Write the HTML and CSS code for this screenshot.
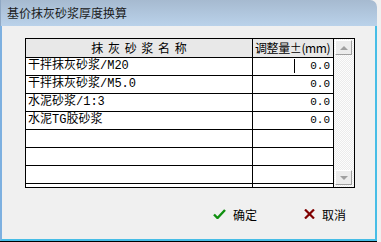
FILE: index.html
```html
<!DOCTYPE html>
<html lang="zh-CN">
<head>
  <meta charset="UTF-8">
  <title>基价抹灰砂浆厚度换算</title>
  <link rel="stylesheet" href="styles.css">
</head>
<body>
  <div class="window">
    <div class="titlebar">基价抹灰砂浆厚度换算</div>
    <div class="client">
      <div class="grid">
        <div class="table">
          <div class="row head">
            <div class="cell name">抹 灰 砂 浆 名 称</div>
            <div class="cell val">调整量±(mm)</div>
          </div>
          <div class="row">
            <div class="cell name">干拌抹灰砂浆/M20</div>
            <div class="cell val"><span class="caret"></span>0.0</div>
          </div>
          <div class="row">
            <div class="cell name">干拌抹灰砂浆/M5.0</div>
            <div class="cell val">0.0</div>
          </div>
          <div class="row">
            <div class="cell name">水泥砂浆/1:3</div>
            <div class="cell val">0.0</div>
          </div>
          <div class="row">
            <div class="cell name">水泥TG胶砂浆</div>
            <div class="cell val">0.0</div>
          </div>
          <div class="row"><div class="cell name"></div><div class="cell val"></div></div>
          <div class="row"><div class="cell name"></div><div class="cell val"></div></div>
          <div class="row"><div class="cell name"></div><div class="cell val"></div></div>
          <div class="row"><div class="cell name"></div><div class="cell val"></div></div>
        </div>
        <div class="scroll">
          <div class="sbtn"><span class="arrow up"></span></div>
          <div class="sbtn"><span class="arrow down"></span></div>
        </div>
      </div>

      <div class="actions">
        <button class="btn" type="button">
          <svg width="13" height="10" viewBox="0 0 13 10"><path d="M1 5.5 L4.5 9 L12 1" fill="none" stroke="#109010" stroke-width="2.4"/></svg>
          确定
        </button>
        <button class="btn" type="button">
          <svg width="11" height="10" viewBox="0 0 11 10"><path d="M1 0.5 L10 9.5 M10 0.5 L1 9.5" fill="none" stroke="#800000" stroke-width="2.2"/></svg>
          取消
        </button>
      </div>
    </div>
  </div>
</body>
</html>
```

FILE: styles.css
```css
* {
  box-sizing: border-box;
}

body {
  margin: 0;
  padding: 0;
  background: #f0f0f0;
  font-family: "Noto Sans CJK SC", sans-serif;
  font-size: 12px;
  color: #000;
}

.window {
  width: 377px;
  height: 242px;
  display: flex;
  flex-direction: column;
  border-bottom: 1px solid #000;
}

.titlebar {
  height: 26px;
  line-height: 26px;
  padding-left: 6px;
  background: linear-gradient(#a6bad0, #bad2ea);
  border-radius: 0 7px 0 0;
  border-left: 1px solid #8fa8c4;
  color: #1a1a1a;
}

.client {
  flex: 1;
  background: #f0f0f0;
  border-left: 2px solid #7db0e0;
  border-right: 2px solid #46bde6;
  border-bottom: 2px solid #46bde6;
  padding: 12px 0 0 23px;
}

.grid {
  width: 330px;
  height: 150px;
  border: 1px solid #000;
  display: flex;
  background: #fff;
}

.table {
  width: 308px;
  height: 148px;
  overflow: hidden;
}

.row {
  display: flex;
  height: 18px;
  border-bottom: 1px solid #000;
}

.row.head {
  height: 19px;
  background: #e8e8e8;
}

.cell {
  height: 100%;
  border-right: 1px solid #000;
  line-height: 17px;
  white-space: nowrap;
  overflow: hidden;
}

.cell.name {
  width: 227px;
  padding-left: 2px;
  font-family: "Liberation Mono", "Noto Sans CJK SC", monospace;
}

.cell.val {
  width: 81px;
  position: relative;
  text-align: right;
  padding-right: 3px;
  font-family: "Liberation Mono", monospace;
  font-size: 11px;
}

.head .cell {
  line-height: 18px;
  text-align: center;
  font-family: "Noto Sans CJK SC", sans-serif;
  font-size: 12px;
  padding: 0;
}

.head .cell.name {
  word-spacing: 2px;
}

.head .cell.val {
  text-align: left;
  padding-left: 2px;
  letter-spacing: -0.4px;
}

.caret {
  position: absolute;
  left: 41px;
  top: 1px;
  width: 1px;
  height: 14px;
  background: #000;
}

.scroll {
  width: 20px;
  height: 148px;
  padding: 1px 2px 2px 1px;
  display: flex;
  flex-direction: column;
  justify-content: space-between;
  background: repeating-conic-gradient(#fdfdfd 0 25%, #ececec 0 50%) 0 0 / 2px 2px;
}

.sbtn {
  height: 15px;
  background: #ececec;
  border-top: 1px solid #fff;
  border-left: 1px solid #fff;
  border-right: 1px solid #a0a0a0;
  border-bottom: 1px solid #a0a0a0;
  display: flex;
  align-items: center;
  justify-content: center;
}

.arrow {
  width: 0;
  height: 0;
  border-left: 4px solid transparent;
  border-right: 4px solid transparent;
}

.arrow.up {
  border-bottom: 4px solid #a0a0a0;
}

.arrow.down {
  border-top: 4px solid #a0a0a0;
}

.actions {
  display: flex;
  gap: 16px;
  margin: 14px 0 0 181px;
}

.btn {
  width: 75px;
  height: 24px;
  padding: 0 0 0 7px;
  border: none;
  background: transparent;
  display: flex;
  align-items: center;
  gap: 7px;
  font-family: "Noto Sans CJK SC", sans-serif;
  font-size: 12px;
  color: #000;
}
```
